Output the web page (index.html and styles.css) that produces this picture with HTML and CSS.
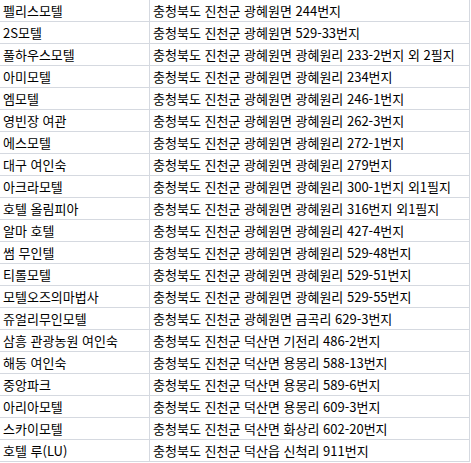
FILE: index.html
```html
<!DOCTYPE html>
<html lang="ko">
<head>
<meta charset="utf-8">
<link rel="stylesheet" href="styles.css">
</head>
<body>
<table class="list">
<colgroup><col class="c-name"><col class="c-addr"></colgroup>
<tbody>
<tr><td>펠리스모텔</td><td>충청북도 진천군 광혜원면 244번지</td></tr>
<tr><td>2S모텔</td><td>충청북도 진천군 광혜원면 529-33번지</td></tr>
<tr><td>풀하우스모텔</td><td>충청북도 진천군 광혜원면 광혜원리 233-2번지 외 2필지</td></tr>
<tr><td>아미모텔</td><td>충청북도 진천군 광혜원면 광혜원리 234번지</td></tr>
<tr><td>엠모텔</td><td>충청북도 진천군 광혜원면 광혜원리 246-1번지</td></tr>
<tr><td>영빈장 여관</td><td>충청북도 진천군 광혜원면 광혜원리 262-3번지</td></tr>
<tr><td>에스모텔</td><td>충청북도 진천군 광혜원면 광혜원리 272-1번지</td></tr>
<tr><td>대구 여인숙</td><td>충청북도 진천군 광혜원면 광혜원리 279번지</td></tr>
<tr><td>아크라모텔</td><td>충청북도 진천군 광혜원면 광혜원리 300-1번지 외1필지</td></tr>
<tr><td>호텔 올림피아</td><td>충청북도 진천군 광혜원면 광혜원리 316번지 외1필지</td></tr>
<tr><td>알마 호텔</td><td>충청북도 진천군 광혜원면 광혜원리 427-4번지</td></tr>
<tr><td>썸 무인텔</td><td>충청북도 진천군 광혜원면 광혜원리 529-48번지</td></tr>
<tr><td>티롤모텔</td><td>충청북도 진천군 광혜원면 광혜원리 529-51번지</td></tr>
<tr><td>모텔오즈의마법사</td><td>충청북도 진천군 광혜원면 광혜원리 529-55번지</td></tr>
<tr><td>쥬얼리무인모텔</td><td>충청북도 진천군 광혜원면 금곡리 629-3번지</td></tr>
<tr><td>삼흥 관광농원 여인숙</td><td>충청북도 진천군 덕산면 기전리 486-2번지</td></tr>
<tr><td>해동 여인숙</td><td>충청북도 진천군 덕산면 용몽리 588-13번지</td></tr>
<tr><td>중앙파크</td><td>충청북도 진천군 덕산면 용몽리 589-6번지</td></tr>
<tr><td>아리아모텔</td><td>충청북도 진천군 덕산면 용몽리 609-3번지</td></tr>
<tr><td>스카이모텔</td><td>충청북도 진천군 덕산면 화상리 602-20번지</td></tr>
<tr><td>호텔 루(LU)</td><td>충청북도 진천군 덕산읍 신척리 911번지</td></tr>
</tbody>
</table>
</body>
</html>
```
FILE: styles.css
```css
html, body {
  margin: 0;
  padding: 0;
  background: #ffffff;
}
.list {
  border-collapse: collapse;
  table-layout: fixed;
  width: 470px;
  margin: -1px 0 0 -1px;
  font-family: "Noto Sans CJK KR", "Noto Sans", sans-serif;
  font-size: 13px;
  color: #000000;
}
.c-name { width: 150px; }
.c-addr { width: 320px; }
.list td {
  border: 1px solid #d5d9e0;
  height: 21px;
  padding: 0 0 0 3px;
  line-height: 21px;
  white-space: nowrap;
  overflow: hidden;
  box-sizing: border-box;
}
```
